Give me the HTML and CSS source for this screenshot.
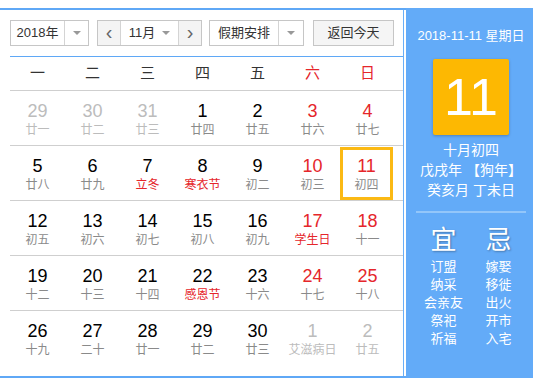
FILE: index.html
```html
<!doctype html>
<html>
<head>
	<meta charset="utf-8">
	<title>万年历</title>
	<link rel="stylesheet" href="styles.css">
</head>
<body>
	<main class="calendar">
		<section class="month-view">
			<div class="toolbar">
				<div class="select year-select">
					<span class="select-text">2018年</span>
					<span class="select-arrow"><i class="caret"></i></span>
				</div>
				<div class="month-group">
					<span class="nav-btn">&lsaquo;</span>
					<span class="month-text">11月<i class="caret"></i></span>
					<span class="nav-btn">&rsaquo;</span>
				</div>
				<div class="select holiday-select">
					<span class="select-text">假期安排</span>
					<span class="select-arrow"><i class="caret"></i></span>
				</div>
				<span class="today-btn">返回今天</span>
			</div>

			<div class="weekdays">
				<span>一</span><span>二</span><span>三</span><span>四</span><span>五</span>
				<span class="red">六</span><span class="red">日</span>
			</div>

			<div class="days">
				<div class="week">
					<div class="day other"><b>29</b><small>廿一</small></div>
					<div class="day other"><b>30</b><small>廿二</small></div>
					<div class="day other"><b>31</b><small>廿三</small></div>
					<div class="day"><b>1</b><small>廿四</small></div>
					<div class="day"><b>2</b><small>廿五</small></div>
					<div class="day weekend"><b>3</b><small>廿六</small></div>
					<div class="day weekend"><b>4</b><small>廿七</small></div>
				</div>
				<div class="week">
					<div class="day"><b>5</b><small>廿八</small></div>
					<div class="day"><b>6</b><small>廿九</small></div>
					<div class="day"><b>7</b><small class="festival">立冬</small></div>
					<div class="day"><b>8</b><small class="festival">寒衣节</small></div>
					<div class="day"><b>9</b><small>初二</small></div>
					<div class="day weekend"><b>10</b><small>初三</small></div>
					<div class="day weekend today"><b>11</b><small>初四</small></div>
				</div>
				<div class="week">
					<div class="day"><b>12</b><small>初五</small></div>
					<div class="day"><b>13</b><small>初六</small></div>
					<div class="day"><b>14</b><small>初七</small></div>
					<div class="day"><b>15</b><small>初八</small></div>
					<div class="day"><b>16</b><small>初九</small></div>
					<div class="day weekend"><b>17</b><small class="festival">学生日</small></div>
					<div class="day weekend"><b>18</b><small>十一</small></div>
				</div>
				<div class="week">
					<div class="day"><b>19</b><small>十二</small></div>
					<div class="day"><b>20</b><small>十三</small></div>
					<div class="day"><b>21</b><small>十四</small></div>
					<div class="day"><b>22</b><small class="festival">感恩节</small></div>
					<div class="day"><b>23</b><small>十六</small></div>
					<div class="day weekend"><b>24</b><small>十七</small></div>
					<div class="day weekend"><b>25</b><small>十八</small></div>
				</div>
				<div class="week">
					<div class="day"><b>26</b><small>十九</small></div>
					<div class="day"><b>27</b><small>二十</small></div>
					<div class="day"><b>28</b><small>廿一</small></div>
					<div class="day"><b>29</b><small>廿二</small></div>
					<div class="day"><b>30</b><small>廿三</small></div>
					<div class="day other"><b>1</b><small>艾滋病日</small></div>
					<div class="day other"><b>2</b><small>廿五</small></div>
				</div>
			</div>
		</section>

		<aside class="detail">
			<div class="detail-date">2018-11-11 星期日</div>
			<div class="big-day">11</div>
			<div class="lunar">
				<p>十月初四</p>
				<p>戊戌年 【狗年】</p>
				<p>癸亥月 丁未日</p>
			</div>
			<div class="divider"></div>
			<div class="advice">
				<div class="advice-col">
					<h2>宜</h2>
					<p>订盟</p>
					<p>纳采</p>
					<p>会亲友</p>
					<p>祭祀</p>
					<p>祈福</p>
				</div>
				<div class="advice-col">
					<h2>忌</h2>
					<p>嫁娶</p>
					<p>移徙</p>
					<p>出火</p>
					<p>开市</p>
					<p>入宅</p>
				</div>
			</div>
		</aside>
	</main>
</body>
</html>
```

FILE: styles.css
```css
* {
	box-sizing: border-box;
}

body {
	margin: 0;
	font-family: "Liberation Sans", "Noto Sans CJK SC", sans-serif;
	color: #222;
	background: white;
}

.calendar {
	margin-top: 8px;
	display: flex;
	height: 370px;
	border-top: 2px solid #5fa8f6;
	border-bottom: 2px solid #5fa8f6;
}

.month-view {
	width: 404px;
	padding: 10px 0 0 10px;
	border-right: 1px solid #6aaef6;
	margin-right: 2px;
}

/* toolbar */

.toolbar {
	display: flex;
	height: 26px;
	margin-right: 9px;
}

.select,
.month-group,
.today-btn {
	display: flex;
	border: 1px solid #c6c6c6;
	font-size: 13px;
	line-height: 24px;
	color: #333;
}

.select-text {
	flex: 1;
	text-align: center;
}

.select-arrow {
	display: flex;
	align-items: center;
	justify-content: center;
	border-left: 1px solid #d4d4d4;
}

.caret {
	display: inline-block;
	width: 0;
	height: 0;
	border-left: 4px solid transparent;
	border-right: 4px solid transparent;
	border-top: 4px solid #999;
}

.year-select {
	width: 79px;
}

.year-select .select-arrow {
	width: 24px;
}

.month-group {
	width: 105px;
	margin-left: 8px;
}

.nav-btn {
	width: 22px;
	text-align: center;
	background: #f4f4f4;
	font-size: 20px;
	line-height: 22px;
	color: #666;
}

.month-text {
	flex: 1;
	display: flex;
	align-items: center;
	justify-content: center;
	gap: 7px;
	border-left: 1px solid #d4d4d4;
	border-right: 1px solid #d4d4d4;
}

.holiday-select {
	width: 95px;
	margin-left: 7px;
}

.holiday-select .select-arrow {
	width: 25px;
}

.today-btn {
	width: 81px;
	margin-left: 9px;
	justify-content: center;
	background: #f5f5f5;
}

/* grid */

.weekdays {
	display: grid;
	grid-template-columns: repeat(7, 55px);
	margin-top: 10px;
	height: 35px;
	border-top: 1px solid #5fa8f6;
	border-bottom: 1px solid #cfcfcf;
	font-size: 15px;
	line-height: 32px;
	text-align: center;
	color: #333;
}

.red {
	color: #e5262b;
}

.week {
	display: grid;
	grid-template-columns: repeat(7, 55px);
	height: 55px;
	border-bottom: 1px solid #cfcfcf;
}

.week:last-child {
	border-bottom: none;
}

.day {
	display: flex;
	flex-direction: column;
	align-items: center;
	padding-top: 9px;
}

.day b {
	font-weight: normal;
	font-size: 18px;
	line-height: 22px;
	color: #000;
}

.day small {
	font-size: 12px;
	line-height: 16px;
	color: #8a8a8a;
}

.day.weekend b,
.day small.festival {
	color: #e5262b;
}

.day.other b,
.day.other small {
	color: #bcbcbc;
}

.day.today {
	margin: 1px 2px 0 0;
	padding-top: 5px;
	border: 3px solid #fbb914;
}

/* detail panel */

.detail {
	flex: 1;
	margin-top: -2px;
	margin-bottom: -2px;
	padding: 18px 7px 0 10px;
	background: #63abf8;
	color: white;
	text-align: center;
}

.detail-date {
	font-size: 13px;
	line-height: 19px;
}

.big-day {
	width: 76px;
	height: 76px;
	margin: 14px auto 0;
	background: #fdb802;
	border-radius: 2px;
	box-shadow: 0 1px 3px rgba(0, 0, 0, 0.25);
	font-size: 52px;
	line-height: 76px;
}

.lunar {
	margin-top: 5px;
	font-size: 14px;
	line-height: 20px;
}

.lunar p,
.advice p {
	margin: 0;
}

.divider {
	margin-top: 11px;
	height: 2px;
	background: #93c6fa;
}

.advice {
	display: grid;
	grid-template-columns: 1fr 1fr;
}

.advice h2 {
	margin: 13px 0 3px;
	font-size: 26px;
	line-height: 29px;
	font-weight: normal;
	text-shadow: 1px 1px 2px rgba(0, 0, 0, 0.3);
}

.advice p {
	font-size: 13px;
	line-height: 18px;
}
```
